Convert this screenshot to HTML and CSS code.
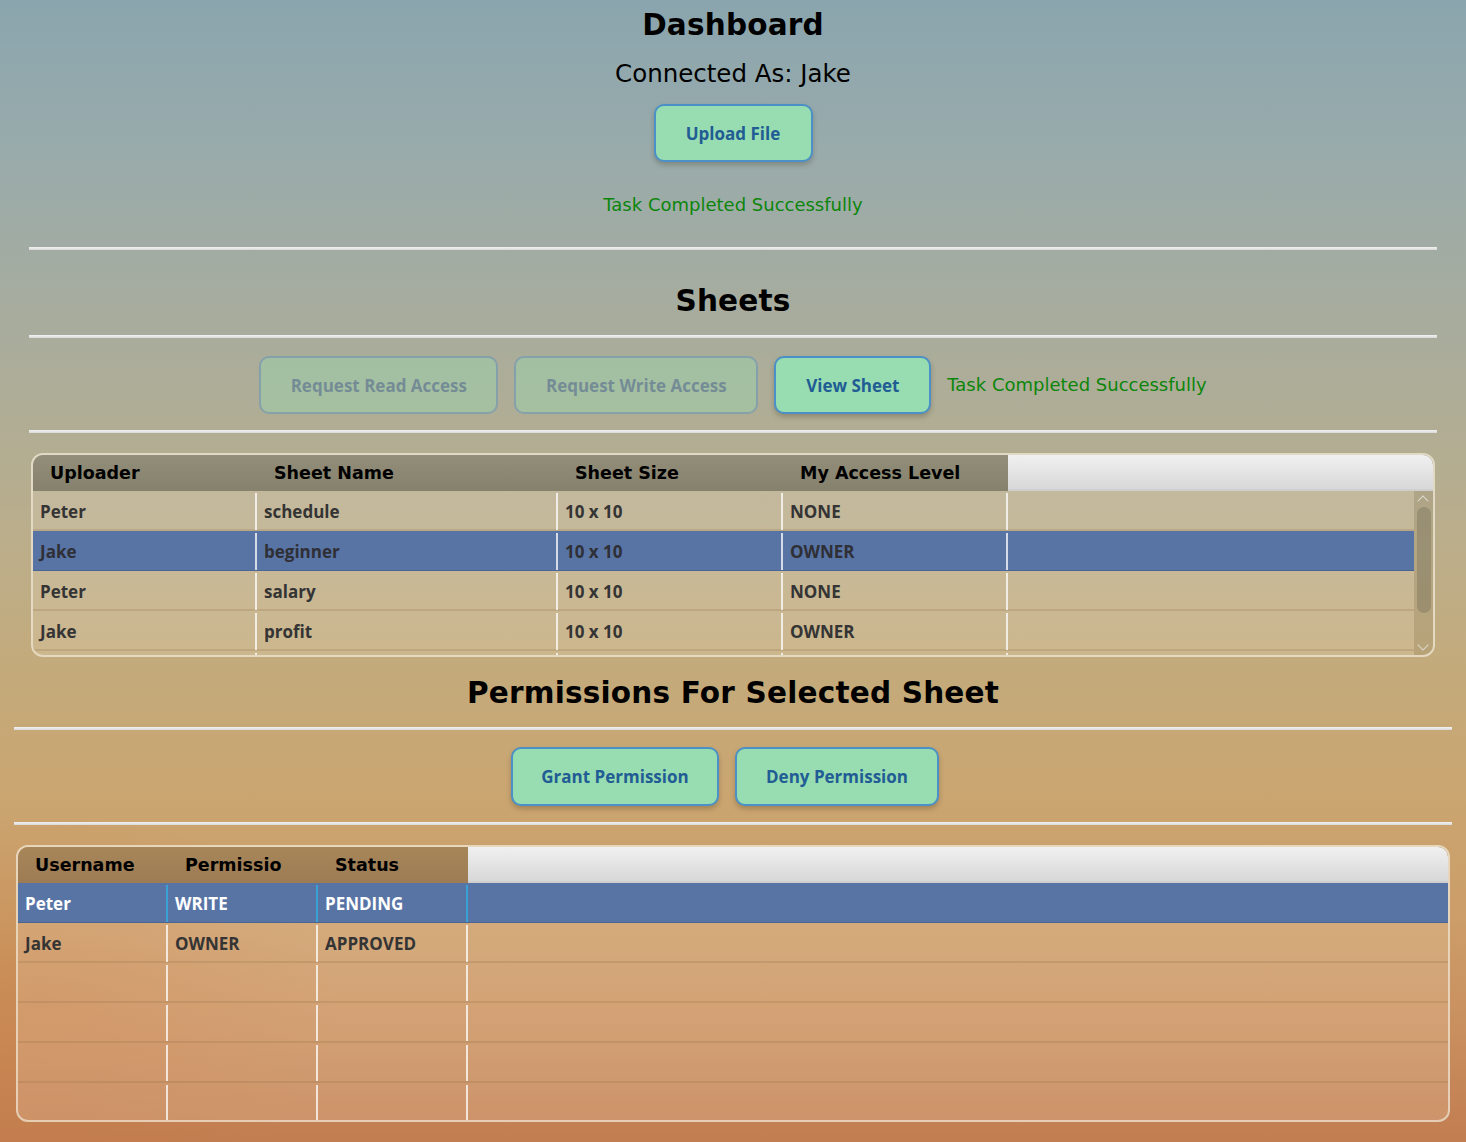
FILE: index.html
```html
<!DOCTYPE html>
<html lang="en">
<head>
<meta charset="utf-8">
<title>Dashboard</title>
<link rel="stylesheet" href="styles.css">
</head>
<body>
<div class="page">
  <section class="top">
    <h1 class="title title-first">Dashboard</h1>
    <div class="connected">Connected As: Jake</div>
    <div class="btn-row btn-row-upload">
      <button class="btn btn-upload">Upload File</button>
    </div>
    <div class="status status-center">Task Completed Successfully</div>
    <div class="rule rule-a"></div>
    <h2 class="title title-sheets">Sheets</h2>
    <div class="rule rule-b"></div>
    <div class="btn-row btn-row-sheets">
      <button class="btn btn-read" disabled>Request Read Access</button>
      <button class="btn btn-write" disabled>Request Write Access</button>
      <button class="btn btn-view">View Sheet</button>
      <span class="status">Task Completed Successfully</span>
    </div>
    <div class="rule rule-b"></div>

    <div class="grid sheets-grid">
      <div class="ghead">
        <div class="hcell">Uploader</div>
        <div class="hcell">Sheet Name</div>
        <div class="hcell">Sheet Size</div>
        <div class="hcell">My Access Level</div>
        <div class="hfill"></div>
      </div>
      <div class="gbody">
        <div class="rows">
          <div class="row"><div class="cell">Peter</div><div class="cell">schedule</div><div class="cell">10 x 10</div><div class="cell">NONE</div><div class="fill"></div></div>
          <div class="row selected"><div class="cell">Jake</div><div class="cell">beginner</div><div class="cell">10 x 10</div><div class="cell">OWNER</div><div class="fill"></div></div>
          <div class="row"><div class="cell">Peter</div><div class="cell">salary</div><div class="cell">10 x 10</div><div class="cell">NONE</div><div class="fill"></div></div>
          <div class="row"><div class="cell">Jake</div><div class="cell">profit</div><div class="cell">10 x 10</div><div class="cell">OWNER</div><div class="fill"></div></div>
          <div class="row"><div class="cell"></div><div class="cell"></div><div class="cell"></div><div class="cell"></div><div class="fill"></div></div>
        </div>
        <div class="scrollbar">
          <span class="arrow arrow-up"></span>
          <span class="thumb"></span>
          <span class="arrow arrow-down"></span>
        </div>
      </div>
    </div>
  </section>

  <section class="bottom">
    <h2 class="title title-perm">Permissions For Selected Sheet</h2>
    <div class="rule rule-c"></div>
    <div class="btn-row btn-row-perm">
      <button class="btn btn-grant">Grant Permission</button>
      <button class="btn btn-deny">Deny Permission</button>
    </div>
    <div class="rule rule-d"></div>

    <div class="grid perm-grid">
      <div class="ghead">
        <div class="hcell">Username</div>
        <div class="hcell">Permissio</div>
        <div class="hcell">Status</div>
        <div class="hfill"></div>
      </div>
      <div class="gbody">
        <div class="rows">
          <div class="row selected"><div class="cell">Peter</div><div class="cell">WRITE</div><div class="cell">PENDING</div><div class="fill"></div></div>
          <div class="row"><div class="cell">Jake</div><div class="cell">OWNER</div><div class="cell">APPROVED</div><div class="fill"></div></div>
          <div class="row"><div class="cell"></div><div class="cell"></div><div class="cell"></div><div class="fill"></div></div>
          <div class="row"><div class="cell"></div><div class="cell"></div><div class="cell"></div><div class="fill"></div></div>
          <div class="row"><div class="cell"></div><div class="cell"></div><div class="cell"></div><div class="fill"></div></div>
          <div class="row"><div class="cell"></div><div class="cell"></div><div class="cell"></div><div class="fill"></div></div>
        </div>
      </div>
    </div>
  </section>
</div>
</body>
</html>
```

FILE: styles.css
```css
* { box-sizing: border-box; }

html, body {
  margin: 0;
  padding: 0;
}

body {
  width: 1466px;
  min-height: 1142px;
  overflow: hidden;
  font-family: "DejaVu Sans", Verdana, sans-serif;
  color: #000;
  background:
    radial-gradient(ellipse 300px 200px at 40px 1010px, rgba(200,120,60,0.35), rgba(200,120,60,0) 100%),
    linear-gradient(180deg,
      #8aa5ae 0px,
      #99abab 150px,
      #a6ac9f 300px,
      #b1ad94 430px,
      #bcae8a 550px,
      #c4aa7a 680px,
      #caa570 800px,
      #cc9d68 920px,
      #c98f5e 1030px,
      #c27d50 1142px);
}

.page {
  display: flex;
  flex-direction: column;
}

.top {
  display: flex;
  flex-direction: column;
  align-items: stretch;
  padding: 0 29px;
}

.bottom {
  display: flex;
  flex-direction: column;
  padding: 0 14px;
}

.title {
  margin: 0;
  text-align: center;
  font-weight: bold;
  font-size: 29.5px;
  line-height: 36px;
  letter-spacing: 0.2px;
}

.title-first { margin-top: 7px; }
.title-sheets { margin-top: 33px; }
.title-perm { margin-top: 18px; }

.connected {
  margin-top: 16px;
  text-align: center;
  font-size: 24.5px;
  line-height: 30px;
}

.status {
  color: #0b860b;
  font-size: 18px;
  line-height: 24px;
}

.status-center {
  margin-top: 31px;
  text-align: center;
}

.rule {
  height: 3px;
  background: linear-gradient(180deg, #f2f2f2, #d9d9d9);
}

.rule-a { margin-top: 30px; }
.rule-b { margin-top: 16px; }
.rule-c { margin-top: 16px; }
.rule-d { margin-top: 16px; }

.btn-row {
  display: flex;
  justify-content: center;
  align-items: center;
  gap: 16px;
}

.btn-row-upload { margin-top: 15px; }
.btn-row-sheets { margin-top: 18px; }
.btn-row-perm { margin-top: 17px; padding-right: 16px; }

.btn {
  height: 58px;
  padding: 0 10px;
  border: 2px solid #4b90c6;
  border-radius: 10px;
  background: #97ddb1;
  color: #215c94;
  font-family: "Open Sans", "Noto Sans", sans-serif;
  font-weight: 700;
  font-size: 17px;
  box-shadow: 0 3px 5px rgba(60, 50, 30, 0.28);
  cursor: pointer;
}

.btn-upload { width: 159px; }
.btn-read { width: 239px; }
.btn-write { width: 244px; }
.btn-view { width: 157px; }
.btn-grant { width: 208px; height: 59px; }
.btn-deny { width: 204px; height: 59px; }

.btn:disabled {
  opacity: 0.4;
  box-shadow: none;
  cursor: default;
}

/* ---------- grids ---------- */

.grid {
  border: 2px solid rgba(240, 232, 215, 0.75);
  border-radius: 12px;
  overflow: hidden;
}

.sheets-grid {
  margin: 20px 2px 0 2px;
  height: 204px;
}

.perm-grid {
  margin: 20px 2px 0 2px;
  height: 277px;
}

.ghead {
  display: grid;
  height: 36px;
}

.sheets-grid .ghead,
.sheets-grid .row {
  grid-template-columns: 224px 301px 225px 225px 1fr;
}

.perm-grid .ghead,
.perm-grid .row {
  grid-template-columns: 150px 150px 150px 1fr;
}

.sheets-grid .ghead {
  background: linear-gradient(180deg, #938e79, #85816c);
}

.perm-grid .ghead {
  background: linear-gradient(180deg, #a78659, #9d7c55);
}

.hcell {
  padding-left: 17px;
  font-size: 17.5px;
  font-weight: bold;
  line-height: 36px;
  white-space: nowrap;
  overflow: hidden;
}

.hfill {
  background: linear-gradient(180deg, #f0f0f0, #d8d8d8);
  border-bottom: 2px solid #cfcfcf;
}

.gbody {
  display: flex;
  height: calc(100% - 36px);
}

.rows {
  flex: 1;
  overflow: hidden;
}

.row {
  display: grid;
  height: 40px;
  background: rgba(255, 246, 225, 0.17);
  border-bottom: 2px solid rgba(140, 110, 70, 0.22);
}

.cell {
  padding: 0 7px;
  line-height: 37px;
  font-family: "Open Sans", "Noto Sans", sans-serif;
  font-weight: 700;
  font-size: 17px;
  color: #343434;
  border-right: 2px solid rgba(255, 255, 255, 0.75);
  margin: 2px 0 0 0;
}

.row.selected {
  background: #5874a5;
  border-bottom: 1px solid #4a6593;
}

.sheets-grid .row.selected .cell { color: #2f2f36; }

.perm-grid .row.selected .cell {
  color: #fff;
  border-right-color: #3ba1d4;
}

/* ---------- scrollbar ---------- */

.scrollbar {
  width: 19px;
  position: relative;
  background: rgba(140, 130, 100, 0.18);
}

.thumb {
  position: absolute;
  top: 16px;
  left: 3px;
  width: 14px;
  height: 106px;
  border-radius: 7px;
  background: rgba(110, 105, 85, 0.35);
}

.arrow {
  position: absolute;
  left: 5px;
  width: 8px;
  height: 8px;
  border-left: 1.5px solid rgba(240, 240, 240, 0.7);
  border-top: 1.5px solid rgba(240, 240, 240, 0.7);
}

.arrow-up {
  top: 6px;
  transform: rotate(45deg);
}

.arrow-down {
  bottom: 6px;
  transform: rotate(225deg);
}
```
